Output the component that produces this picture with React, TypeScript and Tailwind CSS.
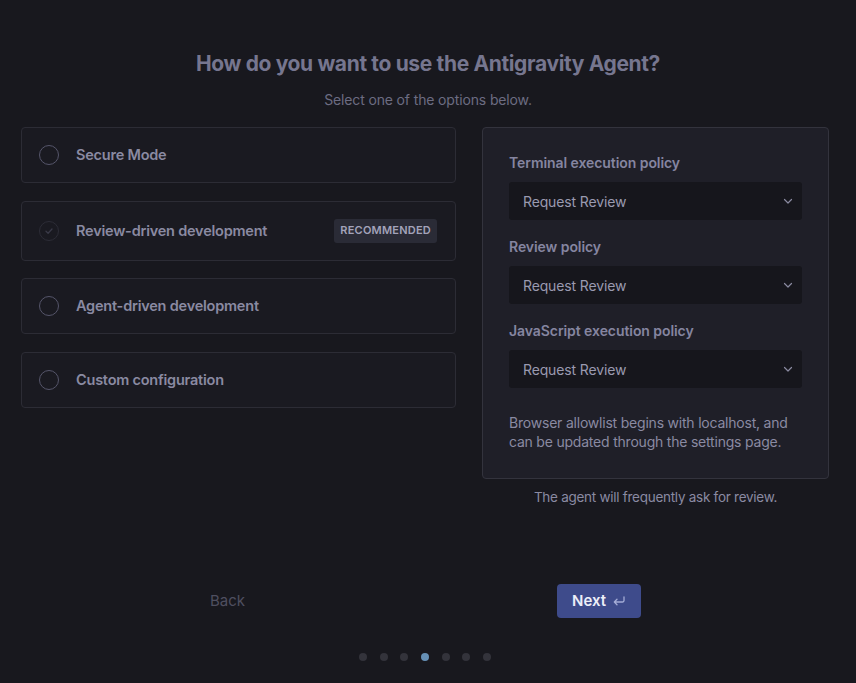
import { useState } from 'react';

const OPTIONS = [
  { id: 'secure', label: 'Secure Mode' },
  { id: 'review', label: 'Review-driven development', badge: 'RECOMMENDED' },
  { id: 'agent', label: 'Agent-driven development' },
  { id: 'custom', label: 'Custom configuration' },
];

const POLICIES = ['Terminal execution policy', 'Review policy', 'JavaScript execution policy'];

function Chevron() {
  return (
    <svg width="12" height="12" viewBox="0 0 12 12" fill="none" className="text-[#8a8aa0]">
      <path d="M2.5 4.5 6 8l3.5-3.5" stroke="currentColor" strokeWidth="1.2" strokeLinecap="round" strokeLinejoin="round" />
    </svg>
  );
}

function Radio({ checked }: { checked: boolean }) {
  return (
    <span className={`w-[20px] h-[20px] rounded-full border flex items-center justify-center shrink-0 ${checked ? 'border-[#2c2c36]' : 'border-[#55556a]'}`}>
      {checked && (
        <svg width="12" height="12" viewBox="0 0 12 12" fill="none">
          <path d="M3 6.2 5.1 8.2 9 4" stroke="#3a3a48" strokeWidth="1.3" strokeLinecap="round" strokeLinejoin="round" />
        </svg>
      )}
    </span>
  );
}

export default function App() {
  const [selected, setSelected] = useState('review');

  return (
    <div className="w-[856px] h-[683px] bg-[#18181e] overflow-hidden" style={{ fontFamily: 'Inter, "Noto Sans", sans-serif' }}>
      <div className="pt-[50px] flex flex-col items-center">
        <h1 className="text-[21px] leading-[28px] font-bold tracking-[-0.017em] text-[#76768f]">How do you want to use the Antigravity Agent?</h1>
        <p className="mt-3 text-[14px] leading-[20px] tracking-[-0.01em] text-[#6c6c82]">Select one of the options below.</p>
      </div>

      {/* Options + policy panel */}
      <div className="flex gap-[26px] pl-[21px] mt-[17px]">
        <div className="w-[435px] flex flex-col gap-[17.5px]">
          {OPTIONS.map(o => (
            <button key={o.id} onClick={() => setSelected(o.id)}
              className="flex items-center bg-[#1a1a21] border border-[#2c2c35] rounded-[4px] pl-[17px] pr-[18px] py-[17px] text-left">
              <Radio checked={selected === o.id} />
              <span className="ml-[17px] flex-1 text-[14.5px] leading-[20px] font-semibold tracking-[-0.015em] text-[#8a8aa2]">{o.label}</span>
              {o.badge && (
                <span className="h-[24px] px-[6px] flex items-center rounded-[3px] bg-[#2a2b36] text-[11px] font-semibold tracking-[0.02em] text-[#a3a3ba]">
                  {o.badge}
                </span>
              )}
            </button>
          ))}
        </div>

        <div className="w-[347px] flex flex-col items-center">
          <div className="w-full bg-[#1f1f28] border border-[#33333d] rounded-[4px] px-[26px] pt-[25px] pb-[27px]">
            {POLICIES.map((p, i) => (
              <div key={p} className={i > 0 ? 'mt-[17px]' : ''}>
                <div className="text-[14px] leading-[20px] font-semibold tracking-[-0.005em] text-[#8585a0]">{p}</div>
                <div className="mt-[9px] h-[38px] bg-[#16161c] rounded-[3px] pl-[14px] pr-[8px] flex items-center justify-between">
                  <span className="text-[14px] tracking-[-0.01em] text-[#9a9ab0]">Request Review</span>
                  <Chevron />
                </div>
              </div>
            ))}
            <p className="mt-[25px] text-[14px] leading-[19px] tracking-[-0.015em] text-[#8a8aa2]">
              Browser allowlist begins with localhost, and can be updated through the settings page.
            </p>
          </div>
          <p className="mt-[8px] text-[13.5px] leading-[20px] tracking-[-0.02em] text-[#8a8aa2]">The agent will frequently ask for review.</p>
        </div>
      </div>

      {/* Footer actions */}
      <div className="flex items-center mt-[77px] pl-[210px]">
        <button className="text-[15px] text-[#4f4f60]">Back</button>
        <button className="ml-[312px] w-[84px] h-[34px] rounded-[4px] bg-[#3e4b8b] flex items-center justify-center gap-[6px] text-[15px] font-semibold text-[#eceef8]">
          Next
          <svg width="14" height="12" viewBox="0 0 14 12" fill="none">
            <path d="M12 2v3.5a1.5 1.5 0 0 1-1.5 1.5H2.5M5 4.2 2.3 7 5 9.8" stroke="#a4acd6" strokeWidth="1.3" strokeLinecap="round" strokeLinejoin="round" />
          </svg>
        </button>
      </div>

      <div className="mt-[35px] flex justify-center gap-[12.7px] pr-[6px]">
        {[0, 1, 2, 3, 4, 5, 6].map(i => (
          <span key={i} className={`w-[8px] h-[8px] rounded-full ${i === 3 ? 'bg-[#6690b6]' : 'bg-[#33333b]'}`} />
        ))}
      </div>
    </div>
  );
}
